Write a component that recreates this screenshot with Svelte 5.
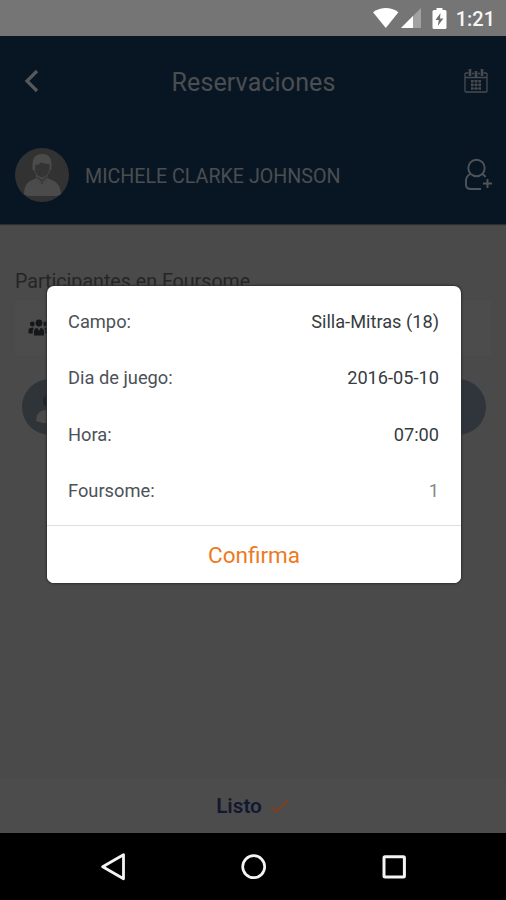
<script>
  const details = [
    { label: 'Campo:', value: 'Silla-Mitras (18)' },
    { label: 'Dia de juego:', value: '2016-05-10' },
    { label: 'Hora:', value: '07:00' },
    { label: 'Foursome:', value: '1', muted: true }
  ];
</script>

<div class="screen">
  <div class="status">
    <svg width="26" height="20" viewBox="0 0 26 20"><path d="M0 4.200Q13-4 25.400 4.200L12.800 20Z" fill="#fff" /></svg>
    <svg class="signal" width="20" height="20" viewBox="0 0 20 20">
      <path d="M20 0V20H0Z" fill="#a2a2a2" /><path d="M12 8V20H0Z" fill="#fff" />
    </svg>
    <svg class="battery" width="15" height="21" viewBox="0 0 15 21">
      <path d="M4.500 0h6v2H13q1.500 0 1.500 1.500v16Q14.500 21 13 21H2Q.5 21 .5 19.500v-16Q.5 2 2 2h2.500Z" fill="#fff" />
      <path d="M8.500 5 3.500 12h3.300L5.800 18l5.600-7.500H8Z" fill="#707070" />
    </svg>
    <span class="clock">1:21</span>
  </div>

  <header>
    <div class="title-row">
      <svg class="back" width="16" height="24" viewBox="0 0 16 24"><path d="M13 2 3 12l10 10" fill="none" stroke="#55595c" stroke-width="3.200" /></svg>
      <h1>Reservaciones</h1>
      <svg class="calendar" width="24" height="26" viewBox="0 0 24 26" fill="none" stroke="#484b4f" stroke-width="1.300">
        <path d="M4.500 5H2.200Q1 5 1 6v16.700Q1 24 2.200 24h19.600Q23 24 23 22.700V6Q23 5 21.800 5h-2.300M8 5.500h2M14 5.500h2M1.500 9.500h21" />
        <path d="M6 1v7M12 3v6M18 1v7" stroke-width="2.600" />
        <path d="M8.200 12v10M12 12v10M15.800 12v10" stroke-width="2.500" stroke-dasharray="2.600 1" />
        <path d="M8 13h8M8 16.800h8M8 20.500h8" stroke-width=".7" />
      </svg>
    </div>
    <div class="user-row">
      <svg class="avatar" width="54" height="54" viewBox="0 0 54 54">
        <circle cx="27" cy="27" r="27" fill="#323232" />
        <path d="M9 46q0-11 8-14l6-2.500h8l6 2.500q8.500 3 9 14-2 2-5 2H14q-3 0-5-2Z" fill="#4b4b4b" />
        <path d="M21 27v6l5.500 3.500 6-3.500v-6Z" fill="#484848" />
        <path d="M18.500 16q0 12 8.500 14 8.500-2 8.500-14l-3-2H22Z" fill="#343434" stroke="#484848" />
        <path d="M17.500 22V15Q18 6 27 6q9 0 9.500 9v7h-1.500l-.5-6q-6 0-8-2-2 3-6 3l-.5 5Z" fill="#4b4b4b" />
        <path d="m22 29 5 4 5-4M27 33v3" fill="none" stroke="#353535" stroke-width="1.200" />
      </svg>
      <span class="name">MICHELE CLARKE JOHNSON</span>
      <svg class="add" width="29" height="34" viewBox="0 0 29 34" fill="none" stroke="#505458" stroke-width="1.900">
        <circle cx="12.500" cy="10" r="8.200" />
        <path d="M6.500 16Q2 18 2 23v4q0 4 5 4h10M18 16q2.500 1 3.500 3M23.500 21v9M19 25.500h9" />
      </svg>
    </div>
  </header>

  <main>
    <h2>Participantes en Foursome</h2>
    <div class="group">
      <svg width="22" height="18" viewBox="0 0 22 18" fill="#141819">
        <circle cx="11" cy="4" r="3.400" /><circle cx="4.300" cy="5" r="2.400" /><circle cx="17.700" cy="5" r="2.400" />
        <path d="M6 16.500V12.500q0-3.500 3.500-3.500l1.500 3 1.500-3q3.500 0 3.500 3.500v4ZM.5 14.500v-3q0-2.800 3-2.800H6q-1.200 1.500-1.200 3v2.800ZM21.500 14.500v-3q0-2.800-3-2.800H16q1.200 1.500 1.200 3v2.800Z" />
      </svg>
    </div>
    <div class="slots">
      <svg width="56" height="56" viewBox="0 0 56 56">
        <circle cx="28" cy="28" r="28" fill="#2f3439" />
        <path d="M14 42q0-9 8-11h12q8 2 8 11-14 5-28 0Z" fill="#4b4b4b" />
        <circle cx="29" cy="22" r="8.500" fill="#1f2428" stroke="#33373a" />
      </svg>
      <span class="slot"></span>
    </div>
  </main>

  <footer>
    <span class="done">Listo</span>
    <svg width="20" height="16" viewBox="0 0 20 16"><path d="m1 8.500 5.500 5L19 1.200" fill="none" stroke="#7c4022" stroke-width="2" /></svg>
  </footer>

  <nav>
    <svg width="26" height="28" viewBox="0 0 26 28"><path d="M23.500 1.800v24L2.700 13.800Z" fill="none" stroke="#f4f4f4" stroke-width="2.800" stroke-linejoin="round" /></svg>
    <svg width="26" height="26" viewBox="0 0 26 26"><circle cx="12.700" cy="12.700" r="11" fill="none" stroke="#f4f4f4" stroke-width="2.700" /></svg>
    <svg width="26" height="26" viewBox="0 0 26 26"><rect x="3" y="2.700" width="20.400" height="20.400" rx="1" fill="none" stroke="#f4f4f4" stroke-width="3" /></svg>
  </nav>

  <section class="dialog">
    <dl>
      {#each details as row}
        <div class="row">
          <dt>{row.label}</dt>
          <dd class:muted={row.muted}>{row.value}</dd>
        </div>
      {/each}
    </dl>
    <button>Confirma</button>
  </section>
</div>

<style>
  .screen {
    position: relative;
    display: flex;
    flex-direction: column;
    width: 506px;
    height: 900px;
    overflow: hidden;
    background: #4a4a4a;
    color: #4b4e51;
    font-family: Roboto, sans-serif;
  }
  svg { display: block; flex: none; }
  .status {
    display: flex;
    align-items: center;
    justify-content: flex-end;
    box-sizing: border-box;
    height: 36px;
    padding-right: 11px;
    background: #757575;
    color: #f6f6f6;
  }
  .signal { margin-left: 2px; }
  .battery { margin-left: 11px; }
  .clock { margin-left: 9px; padding-top: 2px; font-size: 20px; font-weight: 500; line-height: 34px; }
  header { height: 188px; background: #081624; box-shadow: 0 1px 1px #292e32; }
  .title-row {
    display: flex;
    align-items: center;
    box-sizing: border-box;
    height: 90px;
    padding: 0 18px 0 24px;
  }
  h1 { flex: 1; margin: 2px 0 0 3px; font-size: 25px; font-weight: 400; letter-spacing: 0.12px; text-align: center; }
  .user-row {
    display: flex;
    align-items: center;
    box-sizing: border-box;
    height: 98px;
    padding: 0 13px 0 14.5px;
  }
  .name { flex: 1; margin: 2px 0 0 16.5px; font-size: 19.65px; }
  main { flex: 1; padding: 0 15px; }
  h2 { margin: 46px 0 0; font-size: 19.65px; font-weight: 400; line-height: 24px; color: #252525; }
  .group {
    display: flex;
    align-items: center;
    height: 56px;
    margin-top: 6px;
    padding-left: 13px;
    background: #4c4c4c;
  }
  .slots { display: flex; justify-content: space-between; margin-top: 23px; padding: 0 5px 0 7px; }
  .slot { width: 56px; height: 56px; border-radius: 50%; background: #2f353b; }
  footer {
    display: flex;
    align-items: center;
    justify-content: center;
    gap: 8px;
    height: 54px;
    background: #4c4c4c;
  }
  .done { font-size: 20.7px; font-weight: 600; color: #131831; }
  nav {
    display: flex;
    align-items: center;
    justify-content: space-between;
    box-sizing: border-box;
    height: 67px;
    padding: 0 99px 0 100px;
    background: #000;
  }
  .dialog {
    position: absolute;
    top: 286px;
    left: 47px;
    display: flex;
    flex-direction: column;
    width: 414px;
    height: 297px;
    overflow: hidden;
    border-radius: 7px;
    background: #fff;
    box-shadow: 0 0 2px 1px #303030;
  }
  dl { height: 239px; box-sizing: border-box; margin: 0; padding: 7.3px 22px 0 21px; }
  .row { display: flex; align-items: center; justify-content: space-between; height: 56.3px; font-size: 18.2px; }
  dt { color: #4c5257; font-size: 18.3px; }
  dd { margin: 0; color: #373c41; }
  dd.muted { color: #85888b; }
  button {
    flex: 1;
    padding: 0;
    border: 0;
    border-top: 1px solid #dedede;
    background: #fff;
    color: #ed7a22;
    font: 400 22.5px Roboto, sans-serif;
  }
</style>
